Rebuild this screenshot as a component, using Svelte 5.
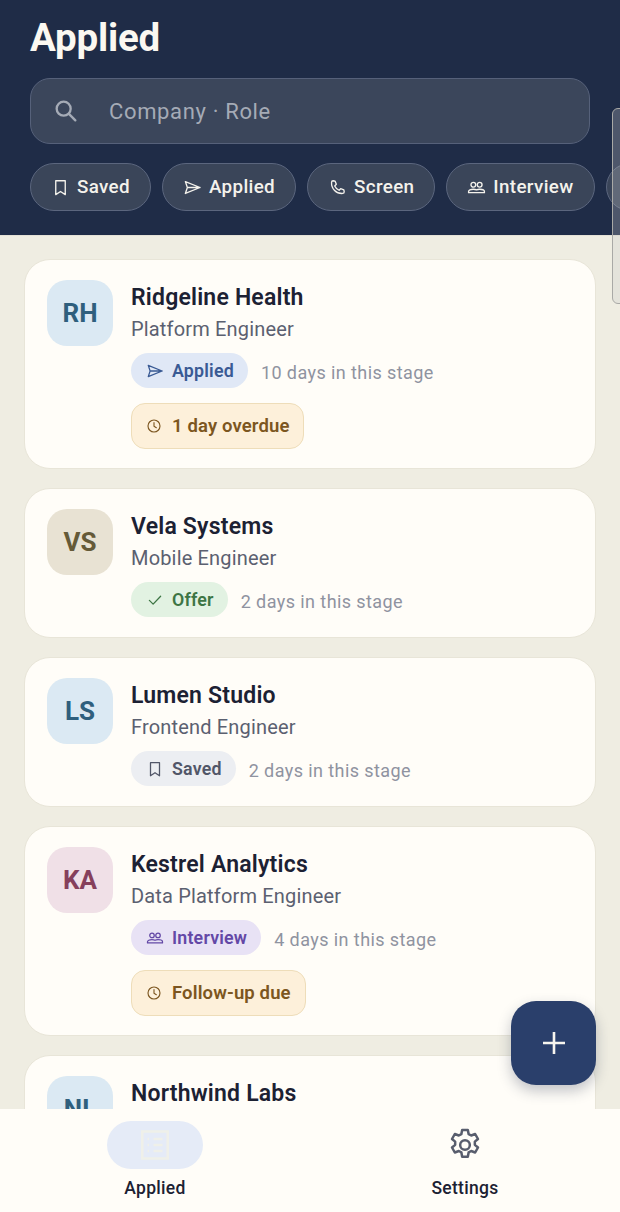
<script>
  const chips = [
    { label: 'Saved', icon: 'saved' },
    { label: 'Applied', icon: 'applied' },
    { label: 'Screen', icon: 'screen' },
    { label: 'Interview', icon: 'interview' },
    { label: 'Offer', icon: 'offer' }
  ];

  const jobs = [
    { initials: 'RH', tone: 'blue', company: 'Ridgeline Health', role: 'Platform Engineer', stage: 'Applied', icon: 'applied', days: '10 days in this stage', due: '1 day overdue' },
    { initials: 'VS', tone: 'sand', company: 'Vela Systems', role: 'Mobile Engineer', stage: 'Offer', icon: 'offer', days: '2 days in this stage' },
    { initials: 'LS', tone: 'blue', company: 'Lumen Studio', role: 'Frontend Engineer', stage: 'Saved', icon: 'saved', days: '2 days in this stage' },
    { initials: 'KA', tone: 'rose', company: 'Kestrel Analytics', role: 'Data Platform Engineer', stage: 'Interview', icon: 'interview', days: '4 days in this stage', due: 'Follow-up due' },
    { initials: 'NL', tone: 'blue', company: 'Northwind Labs', role: 'Site Reliability Engineer', stage: 'Screen', icon: 'screen', days: '1 day in this stage' }
  ];
</script>

{#snippet icon(name, size)}
  <svg width={size} height={size} viewBox="0 0 24 24" fill="none" stroke="currentColor" stroke-width="1.700" stroke-linecap="round" stroke-linejoin="round">
    {#if name === 'saved'}
      <path d="M6 3.500h12v17.500l-6-4-6 4z" />
    {:else if name === 'applied'}
      <path d="M3 4.500L21.500 12 3 19.500 5.500 12zM5.500 12h16" />
    {:else if name === 'screen'}
      <path d="M6.500 3.500l2.500.5 1.500 4-2 2c1 2.200 3 4.200 5.500 5.500l2-2 4 1.500.5 2.500c0 1-.8 2-2 2C10.500 20 4 13.500 4.500 5.500c0-1 1-2 2-2z" />
    {:else if name === 'interview'}
      <circle cx="8" cy="8.500" r="3" />
      <circle cx="16" cy="8.500" r="3" />
      <path d="M2 18.500V17c0-1.500 2.500-2.800 6-2.800 1.600 0 3 .3 4 .8 1-.5 2.400-.8 4-.8 3.500 0 6 1.300 6 2.800v1.500z" />
    {:else if name === 'offer'}
      <path d="M4.500 12.500l5 5 10-10.500" />
    {:else if name === 'clock'}
      <circle cx="12" cy="12" r="9" />
      <path d="M12 7v5.500l3.500 2" />
    {/if}
  </svg>
{/snippet}

<div class="screen">
  <header class="top">
    <h1>Applied</h1>
    <div class="search">
      <svg class="search-icon" width="28" height="28" viewBox="0 0 24 24" fill="none" stroke="currentColor" stroke-width="2" stroke-linecap="round">
        <circle cx="10" cy="10" r="6" />
        <path d="M14.500 14.500L20 20" />
      </svg>
      <span>Company · Role</span>
    </div>
    <div class="chips">
      {#each chips as chip}
        <div class="chip">
          {@render icon(chip.icon, 19)}
          <span>{chip.label}</span>
        </div>
      {/each}
    </div>
  </header>

  <main class="list">
    {#each jobs as job}
      <article class="card">
        <div class="avatar {job.tone}">{job.initials}</div>
        <div class="body">
          <div class="company">{job.company}</div>
          <div class="role">{job.role}</div>
          <div class="meta">
            <span class="stage {job.stage.toLowerCase()}">
              {@render icon(job.icon, 18)}
              {job.stage}
            </span>
            <span class="days">{job.days}</span>
          </div>
          {#if job.due}
            <div class="due">
              {@render icon('clock', 16)}
              {job.due}
            </div>
          {/if}
        </div>
      </article>
    {/each}
  </main>

  <nav class="tabs">
    <div class="tab">
      <div class="pill active">
        <svg width="36" height="36" viewBox="0 0 24 24" fill="none" stroke="currentColor" stroke-width="1.700">
          <rect x="3.500" y="3" width="17" height="18" />
          <path d="M7 8h1M11 8h6M7 12h1M11 12h6M7 16h1M11 16h6" />
        </svg>
      </div>
      <span>Applied</span>
    </div>
    <div class="tab">
      <div class="pill gear">
        <svg width="40" height="40" viewBox="0 0 24 24" fill="none" stroke="currentColor" stroke-width="1.500" stroke-linejoin="round">
          <circle cx="12" cy="12" r="2.900" />
          <path d="M10.300 3h3.400l.5 2.500 1.500.8 2.400-.9 1.700 3-1.900 1.600v1.900l1.900 1.600-1.700 3-2.400-.9-1.500.8-.5 2.600h-3.400l-.5-2.600-1.500-.8-2.400.9-1.700-3 1.900-1.600v-1.900L4.200 8.400l1.700-3 2.400.9 1.500-.8z" />
        </svg>
      </div>
      <span>Settings</span>
    </div>
  </nav>

  <button class="fab" aria-label="Add">
    <svg width="36" height="36" viewBox="0 0 36 36" fill="none" stroke="currentColor" stroke-width="2.600">
      <path d="M18 7v22M7 18h22" />
    </svg>
  </button>

  <div class="scrollbar"></div>
</div>

<style>
  :global(body) {
    margin: 0;
    background: #efede2;
  }

  .screen {
    position: relative;
    width: 620px;
    height: 1212px;
    overflow: hidden;
    display: flex;
    flex-direction: column;
    background: #efede2;
    font-family: Roboto, sans-serif;
    color: #1c2133;
  }

  .top {
    flex: none;
    height: 236px;
    box-sizing: border-box;
    padding: 14px 0 0 30px;
    background: #1f2c47;
    border-bottom: 1px solid #e4e1d6;
  }

  h1 {
    margin: 0;
    font-size: 38.500px;
    line-height: 48px;
    font-weight: 700;
    letter-spacing: -0.2px;
    color: #fbf8f1;
  }

  .search {
    width: 560px;
    height: 66px;
    margin-top: 16px;
    box-sizing: border-box;
    display: flex;
    align-items: center;
    gap: 29px;
    padding-left: 21px;
    border-radius: 20px;
    border: 1px solid #56617a;
    background: #3b465b;
    color: #a5abb6;
    font-size: 22px;
    letter-spacing: 0.65px;
  }

  .search-icon {
    flex: none;
  }

  .chips {
    display: flex;
    gap: 11px;
    margin-top: 19px;
  }

  .chip {
    flex: none;
    height: 48px;
    box-sizing: border-box;
    display: flex;
    align-items: center;
    gap: 7px;
    padding: 0 20px;
    border-radius: 24px;
    border: 1px solid #5b667e;
    background: #3a4559;
    color: #f4f2ec;
    font-size: 18.800px;
    font-weight: 500;
    letter-spacing: 0.35px;
  }

  .list {
    flex: 1;
    min-height: 0;
    overflow: hidden;
    display: flex;
    flex-direction: column;
    gap: 19px;
    padding: 23px 24px 0 24px;
  }

  .card {
    flex: none;
    display: flex;
    gap: 18px;
    padding: 20px 22px 20px 22px;
    border: 1px solid #e8e5d8;
    border-radius: 26px;
    background: #fffdf8;
  }

  .avatar {
    flex: none;
    width: 66px;
    height: 66px;
    border-radius: 20px;
    display: flex;
    align-items: center;
    justify-content: center;
    font-size: 26px;
    font-weight: 700;
  }

  .avatar.blue {
    background: #dbe9f3;
    color: #2f5f7d;
  }

  .avatar.sand {
    background: #e8e2d3;
    color: #655a38;
  }

  .avatar.rose {
    background: #f0e0e7;
    color: #86405c;
  }

  .company {
    margin-top: 2px;
    font-size: 23px;
    line-height: 32px;
    font-weight: 600;
    letter-spacing: 0.2px;
    color: #1c2133;
  }

  .role {
    margin-top: -1px;
    font-size: 20px;
    line-height: 32px;
    letter-spacing: 0.17px;
    color: #5b6070;
  }

  .meta {
    display: flex;
    align-items: center;
    gap: 13px;
    margin-top: 8px;
  }

  .stage {
    height: 35px;
    display: flex;
    align-items: center;
    gap: 8px;
    padding: 0 14px 0 15px;
    border-radius: 18px;
    font-size: 17.800px;
    font-weight: 600;
    letter-spacing: 0.2px;
  }

  .stage.applied {
    background: #e0e8f6;
    color: #395a94;
  }

  .stage.offer {
    background: #e2f2e2;
    color: #3d7544;
  }

  .stage.saved {
    background: #eceef2;
    color: #515668;
  }

  .stage.interview {
    background: #e8e2f5;
    color: #6348a6;
  }

  .stage.screen {
    background: #dff0f2;
    color: #22686f;
  }

  .days {
    font-size: 18px;
    letter-spacing: 0.42px;
    color: #8f93a0;
    padding-top: 4px;
  }

  .due {
    width: fit-content;
    height: 46px;
    box-sizing: border-box;
    display: flex;
    align-items: center;
    gap: 10px;
    margin-top: 15px;
    margin-bottom: -1px;
    padding: 0 14px;
    border: 1px solid #eeddb9;
    border-radius: 14px;
    background: #fdf0da;
    color: #7c5620;
    font-size: 18.500px;
    font-weight: 600;
    letter-spacing: 0.13px;
  }

  .tabs {
    flex: none;
    height: 103px;
    display: grid;
    grid-template-columns: 1fr 1fr;
    position: relative;
    background: #fffdf8;
  }

  .tab {
    display: flex;
    flex-direction: column;
    align-items: center;
    padding-top: 12px;
    font-size: 17.500px;
    font-weight: 500;
    letter-spacing: 0.3px;
    color: #1c2133;
  }

  .tab span {
    margin-top: 9px;
    line-height: 20px;
  }

  .pill {
    width: 96px;
    height: 48px;
    border-radius: 24px;
    display: flex;
    align-items: center;
    justify-content: center;
  }

  .pill.active {
    background: #e5ebf7;
    color: #eff0e9;
  }

  .pill.gear {
    color: #585d6d;
  }

  .fab {
    position: absolute;
    left: 511px;
    top: 1001px;
    width: 85px;
    height: 84px;
    display: flex;
    align-items: center;
    justify-content: center;
    padding: 0;
    border: none;
    border-radius: 25px;
    background: #2a3f6b;
    color: #f7f5ef;
    box-shadow: 0 6px 14px rgba(31, 44, 71, 0.28);
  }

  .scrollbar {
    position: absolute;
    left: 612px;
    top: 108px;
    width: 14px;
    height: 196px;
    box-sizing: border-box;
    border: 1px solid #a9a9a6;
    border-radius: 6px;
    background: rgba(200, 200, 200, 0.28);
  }
</style>
